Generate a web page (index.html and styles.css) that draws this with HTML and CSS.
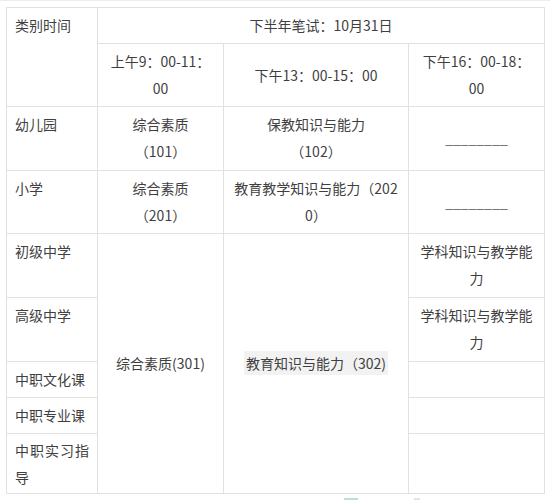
FILE: index.html
```html
<!DOCTYPE html>
<html lang="zh-CN">
<head>
<meta charset="utf-8">
<title>笔试时间</title>
<link rel="stylesheet" href="styles.css">
</head>
<body>
<div class="page">
  <table class="exam">
    <colgroup>
      <col class="c1"><col class="c2"><col class="c3"><col class="c4">
    </colgroup>
    <tr>
      <td class="cat" rowspan="2">类别时间</td>
      <td class="mid" colspan="3">下半年笔试：10月31日</td>
    </tr>
    <tr>
      <td class="mid">上午9：00-11：<br>00</td>
      <td class="mid">下午13：00-15：00</td>
      <td class="mid">下午16：00-18：<br>00</td>
    </tr>
    <tr>
      <td class="cat tall">幼儿园</td>
      <td class="mid tall">综合素质<br>（101）</td>
      <td class="mid tall">保教知识与能力<br>（102）</td>
      <td class="mid tall"><span class="dash">________</span></td>
    </tr>
    <tr>
      <td class="cat">小学</td>
      <td class="mid">综合素质<br>（201）</td>
      <td class="mid">教育教学知识与能力（202<br>0）</td>
      <td class="mid"><span class="dash">________</span></td>
    </tr>
    <tr>
      <td class="cat tall">初级中学</td>
      <td class="mid" rowspan="5">综合素质(301)</td>
      <td class="mid" rowspan="5"><span class="hl">教育知识与能力（302)</span></td>
      <td class="mid tall">学科知识与教学能力</td>
    </tr>
    <tr>
      <td class="cat tall">高级中学</td>
      <td class="mid tall">学科知识与教学能力</td>
    </tr>
    <tr>
      <td class="cat">中职文化课</td>
      <td class="mid"></td>
    </tr>
    <tr>
      <td class="cat">中职专业课</td>
      <td class="mid"></td>
    </tr>
    <tr>
      <td class="cat just last">中职实习指导</td>
      <td class="mid last"></td>
    </tr>
  </table>
  <div class="below">
    <span class="mark green"></span>
    <span class="mark pink"></span>
  </div>
</div>
</body>
</html>
```

FILE: styles.css
```css
html, body {
  margin: 0;
  padding: 0;
  background: #ffffff;
}

.page {
  border-top: 1px solid #eeeeee;
  padding: 6px 0 0 6px;
  font-family: "Noto Sans CJK SC", "Noto Sans", sans-serif;
  font-size: 14px;
  color: #3f3f3f;
}

.exam {
  border-collapse: collapse;
  table-layout: fixed;
  width: 538px;
}

.c1 { width: 91px; }
.c2 { width: 126px; }
.c3 { width: 185px; }
.c4 { width: 136px; }

.exam td {
  border: 1px solid #e1e1e1;
  padding: 4px 8px;
  line-height: 27px;
  word-break: break-all;
}

.exam td.cat {
  text-align: left;
  vertical-align: top;
}

.exam td.mid {
  text-align: center;
  vertical-align: middle;
}

.exam td.tall {
  padding-bottom: 5px;
}

.exam td.just {
  text-align: justify;
}

.exam td.last {
  padding-top: 3px;
  padding-bottom: 2px;
}

.dash {
  color: #666666;
}

.hl {
  background: #f2f2f2;
  padding: 2px 2px;
}

.below {
  display: flex;
  gap: 56px;
  padding-left: 338px;
  padding-top: 4px;
}

.mark {
  display: block;
  width: 14px;
  height: 3px;
}

.green { background: #b9e3cf; }
.pink { background: #f3dcdc; width: 6px; }
```
